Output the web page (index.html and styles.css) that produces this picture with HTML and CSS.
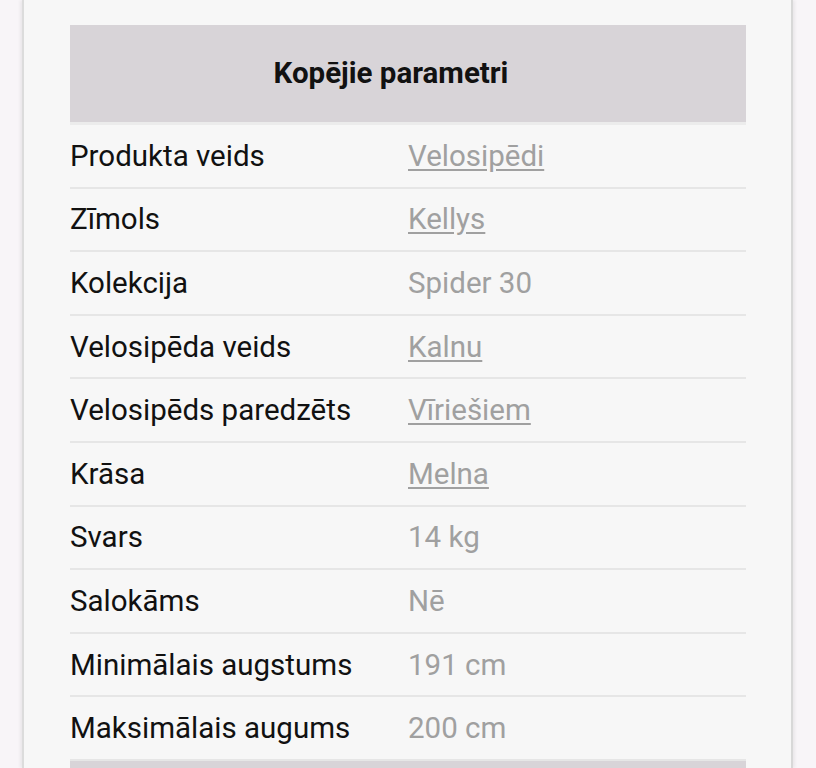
FILE: index.html
```html
<!DOCTYPE html>
<html lang="lv">
<head>
<meta charset="utf-8">
<link rel="stylesheet" href="styles.css">
</head>
<body>
<div class="card">
  <div class="head">Kopējie parametri</div>
  <div class="row"><div class="k">Produkta veids</div><div class="v"><a href="#">Velosipēdi</a></div></div>
  <div class="row"><div class="k">Zīmols</div><div class="v"><a href="#">Kellys</a></div></div>
  <div class="row"><div class="k">Kolekcija</div><div class="v">Spider 30</div></div>
  <div class="row"><div class="k">Velosipēda veids</div><div class="v"><a href="#">Kalnu</a></div></div>
  <div class="row"><div class="k">Velosipēds paredzēts</div><div class="v"><a href="#">Vīriešiem</a></div></div>
  <div class="row"><div class="k">Krāsa</div><div class="v"><a href="#">Melna</a></div></div>
  <div class="row"><div class="k">Svars</div><div class="v">14 kg</div></div>
  <div class="row"><div class="k">Salokāms</div><div class="v">Nē</div></div>
  <div class="row"><div class="k">Minimālais augstums</div><div class="v">191 cm</div></div>
  <div class="row"><div class="k">Maksimālais augums</div><div class="v">200 cm</div></div>
  <div class="head2"></div>
</div>
</body>
</html>
```
FILE: styles.css
```css
html, body { margin: 0; padding: 0; }
body {
  background: #f8f5f8;
  font-family: Roboto, "Noto Sans", sans-serif;
  height: 768px;
  overflow: hidden;
}
.card {
  margin-left: 22px;
  width: 771px;
  box-sizing: border-box;
  background: #f7f7f7;
  border-left: 2px solid #dcdcdc;
  border-right: 2px solid #d8d8d8;
  box-shadow: -2px 0 3px rgba(0,0,0,0.06), 2px 0 3px rgba(0,0,0,0.06);
  padding: 25px 45px 0 46px;
  height: 768px;
  overflow: hidden;
}
.head {
  background: #d8d4d8;
  height: 100px;
  box-sizing: border-box;
  padding: 0 34px 2px 0;
  display: flex;
  align-items: center;
  justify-content: center;
  font-weight: 700;
  font-size: 29.5px;
  color: #111;
  border-bottom: 3px solid #ececec;
}
.row {
  display: grid;
  grid-template-columns: 338px 1fr;
  height: 61.6px;
  align-items: center;
  border-bottom: 2px solid #e6e6e6;
  font-size: 29.5px;
}
.row:last-of-type { border-bottom: none; height: 63px; }
.k { color: #111; }
.v { color: #a0a0a0; }
.v a { color: #a0a0a0; text-decoration: underline; text-underline-offset: 3px; }
.head2 { background: #d8d4d8; height: 60px; }
```
